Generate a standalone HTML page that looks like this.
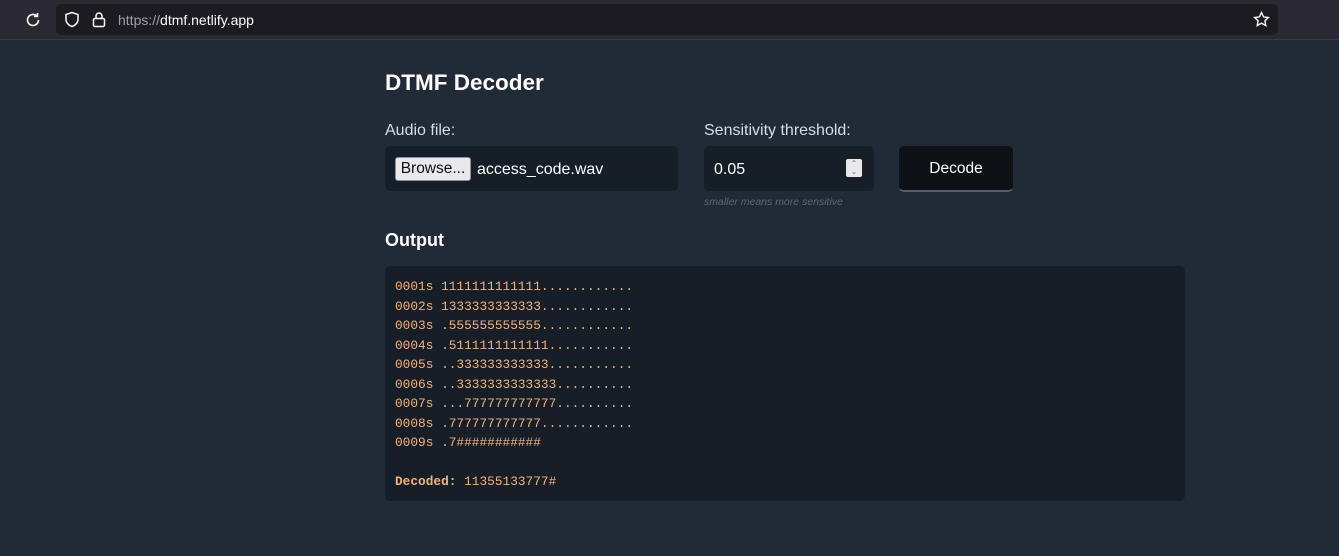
<!DOCTYPE html>
<html><head><style>
*{box-sizing:border-box;margin:0;padding:0}
body{width:1339px;height:556px;overflow:hidden;background:#202b37;font-family:"Liberation Sans",sans-serif;color:#e6e6e6;position:relative}
.top{position:absolute;left:0;top:0;width:1339px;height:40px;background:#2b2a33;border-bottom:1px solid #3a3944}
.url{position:absolute;left:56px;top:4px;width:1222px;height:31px;background:#1c1b22;border-radius:5px}
.url span{position:absolute;left:62px;top:8px;font-size:14px;color:#fbfbfe}
.url span i{font-style:normal;color:#9e9ea6}
h1{position:absolute;left:385px;top:70px;font-size:22.5px;font-weight:bold;color:#fff}
.lbl{position:absolute;font-size:16px;color:#d8dde3}
.box{position:absolute;background:#161e27;border-radius:5px}
.btn{position:absolute;left:395px;top:157px;width:76px;height:24px;background:#e9e9ed;border:1px solid #8f8f9d;border-radius:3px;color:#111;font-size:15.5px;text-align:center;line-height:22px}
h2{position:absolute;left:385px;top:230px;font-size:18px;font-weight:bold;color:#fff}
pre{position:absolute;left:385px;top:266px;width:800px;height:235px;background:#161e27;border-radius:5px;padding:11px 10px;font-family:"Liberation Mono",monospace;font-size:12.8px;line-height:19.5px;color:#f4b27a}
</style></head><body>
<div class="top">
<svg style="position:absolute;left:24px;top:11px" width="18" height="18" viewBox="0 0 18 18" fill="none" stroke="#fbfbfe" stroke-width="1.6"><path d="M14.5 9a5.5 5.5 0 1 1-1.8-4.1"/><path d="M13.5 2v3.5H10" fill="none"/></svg>
<div class="url">
<svg style="position:absolute;left:8px;top:7px" width="16" height="17" viewBox="0 0 16 17" fill="none" stroke="#fbfbfe" stroke-width="1.5"><path d="M8 1.5 2 3.5v5c0 3.5 3 6 6 7 3-1 6-3.5 6-7v-5z"/></svg>
<svg style="position:absolute;left:36px;top:7px" width="14" height="17" viewBox="0 0 14 17" fill="none" stroke="#fbfbfe" stroke-width="1.5"><rect x="1.5" y="7.5" width="11" height="8" rx="1.5"/><path d="M4 7.5V5a3 3 0 0 1 6 0v2.5"/></svg>
<span><i>https://</i>dtmf.netlify.app</span>
<svg style="position:absolute;left:1197px;top:7px" width="17" height="17" viewBox="0 0 17 17" fill="none" stroke="#fbfbfe" stroke-width="1.4"><path d="M8.5 1.5l2.1 4.4 4.8.6-3.5 3.3.9 4.8-4.3-2.4-4.3 2.4.9-4.8L1.6 6.5l4.8-.6z"/></svg>
</div></div>
<h1>DTMF Decoder</h1>
<div class="lbl" style="left:385px;top:122px">Audio file:</div>
<div class="lbl" style="left:704px;top:122px">Sensitivity threshold:</div>
<div class="box" style="left:385px;top:146px;width:293px;height:45px"></div>
<div class="btn">Browse...</div>
<div class="lbl" style="left:477px;top:161px;color:#fff">access_code.wav</div>
<div class="box" style="left:704px;top:146px;width:170px;height:45px"></div>
<div class="lbl" style="left:714px;top:161px;color:#fff">0.05</div>
<div style="position:absolute;left:846px;top:159px;width:16px;height:18px;background:#e9e9ed;border-radius:2px;font-size:8px;color:#777;text-align:center;line-height:8px;padding-top:1px">⌃<br>⌄</div>
<div style="position:absolute;left:704px;top:196px;font-size:10.5px;font-style:italic;color:#5b6672">smaller means more sensitive</div>
<div style="position:absolute;left:899px;top:146px;width:114px;height:46px;background:#0e1217;border-radius:5px;border-bottom:2px solid #56606a;color:#fff;font-size:15.5px;text-align:center;line-height:46px">Decode</div>
<h2>Output</h2>
<pre>0001s 1111111111111............
0002s 1333333333333............
0003s .555555555555............
0004s .5111111111111...........
0005s ..333333333333...........
0006s ..3333333333333..........
0007s ...777777777777..........
0008s .777777777777............
0009s .7###########

<b>Decoded:</b> 11355133777#</pre>
</body></html>
